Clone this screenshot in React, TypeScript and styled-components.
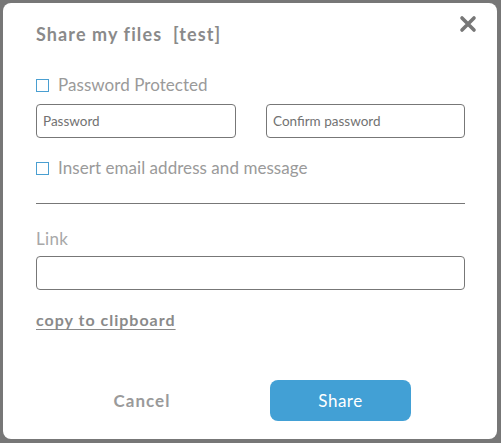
import React from "react";
import styled, { createGlobalStyle } from "styled-components";

const Global = createGlobalStyle`
  html, body { margin: 0; padding: 0; background: #777777; }
  body { font-family: "Lato", "Noto Sans", sans-serif; }
  * { box-sizing: border-box; }
`;

const Page = styled.div`
  width: 501px;
  height: 443px;
  padding: 3px 4px 4px 3px;
  background: #777777;
`;

const Dialog = styled.div`
  position: relative;
  width: 494px;
  height: 436px;
  background: #ffffff;
  border-radius: 8px;
  padding: 20px 32px 0 33px;
  display: flex;
  flex-direction: column;
`;

const Title = styled.h1`
  margin: 0;
  font-size: 18px;
  font-weight: 700;
  color: #8a8a8a;
  letter-spacing: 1.1px;
  white-space: pre;
  line-height: 22px;
`;

const Close = styled.button`
  position: absolute;
  top: 10px;
  right: 18px;
  width: 22px;
  height: 22px;
  padding: 0;
  border: none;
  background: none;
  display: flex;
  align-items: center;
  justify-content: center;
`;

const CheckRow = styled.label<{ $top: number }>`
  display: flex;
  align-items: center;
  gap: 9px;
  margin-top: ${(p) => p.$top}px;
  font-size: 17px;
  letter-spacing: 0.05px;
  color: #9a9a9a;
  line-height: 20px;
`;

const Box = styled.span`
  width: 13px;
  height: 13px;
  border: 1.5px solid #4a9fd1;
  display: inline-block;
  flex: none;
`;

const InputRow = styled.div`
  display: grid;
  grid-template-columns: 200px 199px;
  column-gap: 30px;
  margin-top: 9px;
`;

const Field = styled.input<{ $top?: number }>`
  height: 34px;
  width: 100%;
  border: 1px solid #777777;
  border-radius: 4px;
  padding: 0 6px;
  margin-top: ${(p) => p.$top ?? 0}px;
  font-family: "Lato", "Noto Sans", sans-serif;
  font-size: 13.5px;
  color: #555;
  outline: none;
  &::placeholder { color: #727272; }
`;

const Divider = styled.hr`
  margin: 25px 0 0 0;
  border: none;
  border-top: 1px solid #777777;
  width: 429px;
`;

const FieldLabel = styled.div`
  margin-top: 25px;
  font-size: 17px;
  letter-spacing: 0.3px;
  color: #a8a8a8;
  line-height: 20px;
`;

const CopyLink = styled.a`
  margin-top: 20px;
  align-self: flex-start;
  font-size: 16px;
  font-weight: 700;
  letter-spacing: 1px;
  color: #8a8a8a;
  text-decoration: underline;
  text-underline-offset: 3px;
  line-height: 20px;
`;

const Footer = styled.div`
  margin-top: auto;
  margin-bottom: 18px;
  display: grid;
  grid-template-columns: 212px 141px;
  column-gap: 22px;
  align-items: center;
`;

const Cancel = styled.button`
  border: none;
  background: none;
  font-family: "Lato", "Noto Sans", sans-serif;
  font-size: 17px;
  font-weight: 700;
  letter-spacing: 1px;
  color: #9a9a9a;
  height: 41px;
  padding: 0;
`;

const ShareBtn = styled.button`
  height: 41px;
  border: none;
  border-radius: 8px;
  background: #42a0d5;
  color: #ffffff;
  font-family: "Lato", "Noto Sans", sans-serif;
  font-size: 17px;
  letter-spacing: 0.5px;
`;

export default function App() {
  return (
    <Page>
      <Global />
      <Dialog>
        <Title>{"Share my files  [test]"}</Title>
        <Close aria-label="close">
          <svg width="18" height="18" viewBox="0 0 18 18">
            <path d="M3 3 L15 15 M15 3 L3 15" stroke="#777" strokeWidth="3.6" strokeLinecap="round" />
          </svg>
        </Close>
        <CheckRow $top={30}>
          <Box />
          Password Protected
        </CheckRow>
        <InputRow>
          <Field placeholder="Password" />
          <Field placeholder="Confirm password" />
        </InputRow>
        <CheckRow $top={20}>
          <Box />
          Insert email address and message
        </CheckRow>
        <Divider />
        <FieldLabel>Link</FieldLabel>
        <Field $top={7} />
        <CopyLink>copy to clipboard</CopyLink>
        <Footer>
          <Cancel>Cancel</Cancel>
          <ShareBtn>Share</ShareBtn>
        </Footer>
      </Dialog>
    </Page>
  );
}
